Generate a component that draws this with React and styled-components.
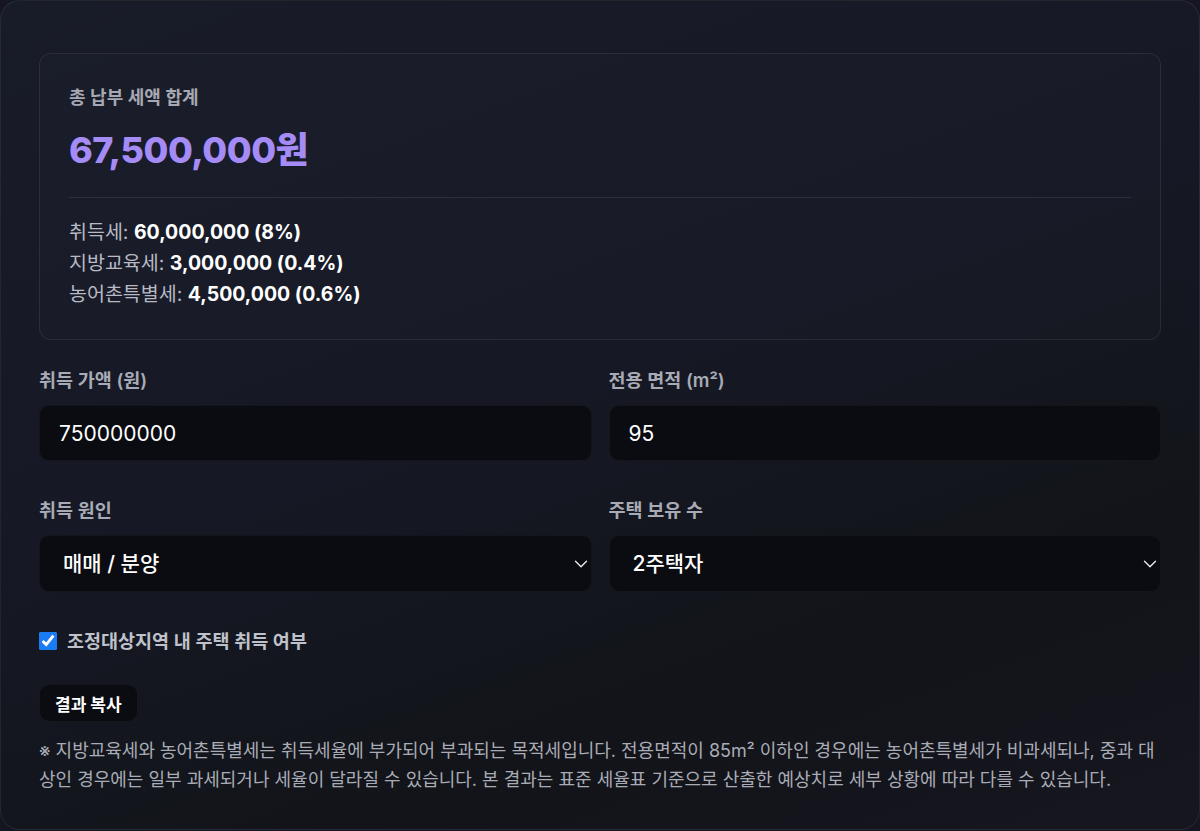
import React, { useState } from 'react';
import styled, { createGlobalStyle } from 'styled-components';
import { ChevronDown } from 'lucide-react';

const GlobalStyle = createGlobalStyle`
    html, body {
        margin: 0;
        padding: 0;
        background: #151621;
    }
    body {
        font-family: Inter, "Noto Sans CJK KR", "Noto Sans", sans-serif;
        -webkit-font-smoothing: antialiased;
    }
    * { box-sizing: border-box; }
`;

const Card = styled.div`
    width: 1200px;
    min-height: 830px;
    padding: 52px 38px 34px;
    border: 1px solid rgba(255, 255, 255, 0.07);
    border-radius: 20px;
    background: linear-gradient(160deg, #181b28 0%, #161925 45%, #121419 75%, #16161f 100%);
    display: flex;
    flex-direction: column;
`;

const Summary = styled.section`
    border: 1px solid rgba(255, 255, 255, 0.08);
    border-radius: 12px;
    padding: 33px 29px 29px;
    background: rgba(255, 255, 255, 0.01);
`;

const SummaryLabel = styled.div`
    font-size: 18px;
    font-weight: 600;
    color: #a6a9b3;
    line-height: 22px;
`;

const Total = styled.div`
    margin-top: 19px;
    font-size: 36px;
    font-weight: 800;
    letter-spacing: -0.5px;
    color: #a58bf6;
    line-height: 44px;
`;

const Divider = styled.hr`
    margin: 25px 0 19px;
    border: none;
    border-top: 1px solid rgba(255, 255, 255, 0.09);
`;

const Breakdown = styled.div`
    display: flex;
    flex-direction: column;
`;

const Line = styled.div`
    font-size: 19.5px;
    line-height: 31px;
    color: #b7bac4;
    b {
        color: #ffffff;
        font-weight: 700;
    }
`;

const Grid = styled.div`
    margin-top: 28px;
    display: grid;
    grid-template-columns: 1fr 1fr;
    column-gap: 17px;
    row-gap: 37px;
`;

const Field = styled.label`
    display: flex;
    flex-direction: column;
    gap: 13px;
`;

const FieldLabel = styled.span`
    font-size: 18.5px;
    font-weight: 600;
    color: #a8abb5;
    line-height: 24px;
`;

const Input = styled.input`
    height: 56px;
    width: 100%;
    padding: 0 19px;
    border: 1px solid rgba(255, 255, 255, 0.04);
    border-radius: 10px;
    background: #0b0c11;
    color: #ffffff;
    font-family: inherit;
    font-size: 21px;
    outline: none;
`;

const SelectWrap = styled.div`
    position: relative;
    svg {
        position: absolute;
        right: 0;
        top: 50%;
        transform: translateY(-50%);
        color: #e9eaee;
        pointer-events: none;
    }
`;

const Select = styled.select`
    appearance: none;
    height: 57px;
    width: 100%;
    padding: 0 23px;
    border: 1px solid rgba(255, 255, 255, 0.04);
    border-radius: 10px;
    background: #0b0c11;
    color: #ffffff;
    font-family: inherit;
    font-size: 21px;
    font-weight: 500;
    outline: none;
`;

const CheckRow = styled.label`
    margin-top: 37px;
    display: flex;
    align-items: center;
    gap: 10px;
    font-size: 18.5px;
    font-weight: 600;
    color: #bfc2cb;
    line-height: 24px;
    input {
        width: 18px;
        height: 18px;
        margin: 0;
        accent-color: #1a7cf5;
    }
`;

const CopyButton = styled.button`
    align-self: flex-start;
    margin-top: 31px;
    height: 38px;
    padding: 0 15px;
    border: 1px solid rgba(255, 255, 255, 0.05);
    border-radius: 10px;
    background: #0b0c11;
    color: #ffffff;
    font-family: inherit;
    font-size: 17px;
    font-weight: 700;
`;

const Note = styled.p`
    margin: 14px 0 0;
    font-size: 18px;
    line-height: 29px;
    color: #a9acb6;
`;

function SelectField({ label, value, options }) {
    return (
        <Field>
            <FieldLabel>{label}</FieldLabel>
            <SelectWrap>
                <Select defaultValue={value}>
                    {options.map(o => <option key={o}>{o}</option>)}
                </Select>
                <ChevronDown size={22} strokeWidth={1.5} />
            </SelectWrap>
        </Field>
    );
}

export default function App() {
    const [regulated, setRegulated] = useState(true);

    return (
        <>
            <GlobalStyle />
            <Card>
                <Summary>
                    <SummaryLabel>총 납부 세액 합계</SummaryLabel>
                    <Total>67,500,000원</Total>
                    <Divider />
                    <Breakdown>
                        <Line>취득세: <b>60,000,000 (8%)</b></Line>
                        <Line>지방교육세: <b>3,000,000 (0.4%)</b></Line>
                        <Line>농어촌특별세: <b>4,500,000 (0.6%)</b></Line>
                    </Breakdown>
                </Summary>

                <Grid>
                    <Field>
                        <FieldLabel>취득 가액 (원)</FieldLabel>
                        <Input defaultValue="750000000" />
                    </Field>
                    <Field>
                        <FieldLabel>전용 면적 (m²)</FieldLabel>
                        <Input defaultValue="95" />
                    </Field>
                    <SelectField label="취득 원인" value="매매 / 분양" options={['매매 / 분양', '상속', '증여', '원시취득']} />
                    <SelectField label="주택 보유 수" value="2주택자" options={['1주택자', '2주택자', '3주택자 이상']} />
                </Grid>

                <CheckRow>
                    <input type="checkbox" checked={regulated} onChange={e => setRegulated(e.target.checked)} />
                    조정대상지역 내 주택 취득 여부
                </CheckRow>

                <CopyButton>결과 복사</CopyButton>

                <Note>
                    ※ 지방교육세와 농어촌특별세는 취득세율에 부가되어 부과되는 목적세입니다. 전용면적이 85m² 이하인 경우에는 농어촌특별세가 비과세되나, 중과 대상인 경우에는 일부 과세되거나 세율이 달라질 수 있습니다. 본 결과는 표준 세율표 기준으로 산출한 예상치로 세부 상황에 따라 다를 수 있습니다.
                </Note>
            </Card>
        </>
    );
}
